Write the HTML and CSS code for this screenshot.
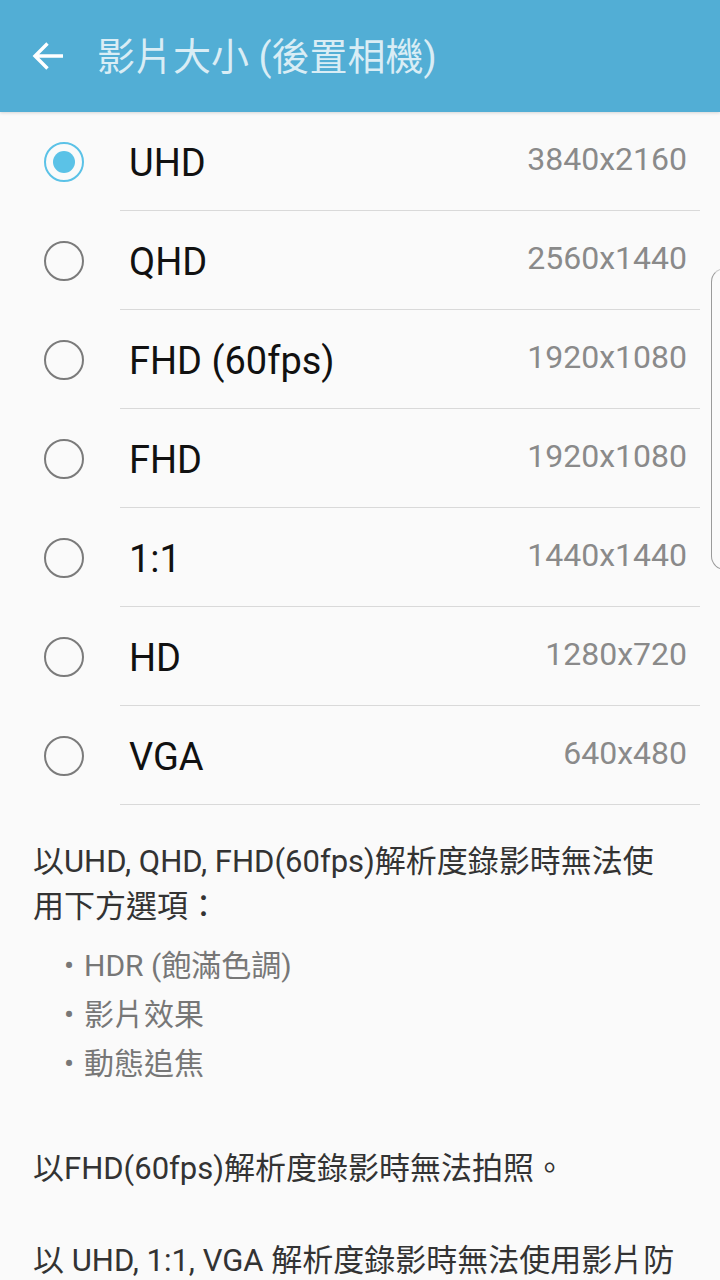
FILE: index.html
```html
<!DOCTYPE html>
<html lang="zh-Hant">
<head>
    <meta charset="UTF-8">
    <meta name="viewport" content="width=device-width, initial-scale=1.0">
    <title>影片大小 (後置相機)</title>
    <link rel="stylesheet" href="styles.css">
</head>
<body>
    <header class="appbar">
        <button class="back" type="button" aria-label="返回">
            <svg width="32" height="32" viewBox="0 0 32 32">
                <path d="M31 16H3M15.5 3.5L3 16l12.5 12.5" fill="none" stroke="#fff" stroke-width="3.4"/>
            </svg>
        </button>
        <h1 class="title">影片大小 (後置相機)</h1>
    </header>

    <ul class="options">
        <li class="option">
            <span class="radio checked"></span>
            <div class="option-body">
                <span class="option-name">UHD</span>
                <span class="option-res">3840x2160</span>
            </div>
        </li>
        <li class="option">
            <span class="radio"></span>
            <div class="option-body">
                <span class="option-name">QHD</span>
                <span class="option-res">2560x1440</span>
            </div>
        </li>
        <li class="option">
            <span class="radio"></span>
            <div class="option-body">
                <span class="option-name">FHD (60fps)</span>
                <span class="option-res">1920x1080</span>
            </div>
        </li>
        <li class="option">
            <span class="radio"></span>
            <div class="option-body">
                <span class="option-name">FHD</span>
                <span class="option-res">1920x1080</span>
            </div>
        </li>
        <li class="option">
            <span class="radio"></span>
            <div class="option-body">
                <span class="option-name">1:1</span>
                <span class="option-res">1440x1440</span>
            </div>
        </li>
        <li class="option">
            <span class="radio"></span>
            <div class="option-body">
                <span class="option-name">HD</span>
                <span class="option-res">1280x720</span>
            </div>
        </li>
        <li class="option">
            <span class="radio"></span>
            <div class="option-body">
                <span class="option-name">VGA</span>
                <span class="option-res">640x480</span>
            </div>
        </li>
    </ul>

    <div class="notes">
        <p class="note">以UHD, QHD, FHD(60fps)解析度錄影時無法使用下方選項：</p>
        <ul class="note-list">
            <li>HDR (飽滿色調)</li>
            <li>影片效果</li>
            <li>動態追焦</li>
        </ul>
        <p class="note note-gap">以FHD(60fps)解析度錄影時無法拍照。</p>
        <p class="note note-last">以 UHD, 1:1, VGA 解析度錄影時無法使用影片防手震。</p>
    </div>

    <div class="edge-handle"></div>
</body>
</html>
```

FILE: styles.css
```css
body {
    font-family: Roboto, "Noto Sans CJK TC", sans-serif;
    background-color: #fafafa;
    margin: 0;
    padding: 0;
    width: 720px;
    height: 1280px;
    overflow: hidden;
    position: relative;
}

.appbar {
    height: 112px;
    background-color: #52aed5;
    display: flex;
    align-items: center;
    box-shadow: 0 1px 3px rgba(0, 0, 0, 0.15);
}

.back {
    width: 32px;
    height: 32px;
    margin-left: 32px;
    padding: 0;
    border: none;
    background: none;
    display: flex;
}

.title {
    margin: 0 0 0 33px;
    font-size: 38px;
    font-weight: normal;
    color: rgba(255, 255, 255, 0.78);
    line-height: 1;
    padding-top: 2px;
}

.options {
    list-style: none;
    margin: 0;
    padding: 0;
}

.option {
    display: flex;
    align-items: center;
}

.radio {
    width: 36px;
    height: 36px;
    margin-left: 44px;
    margin-right: 36px;
    border: 2px solid #7b7b7b;
    border-radius: 50%;
    box-sizing: content-box;
    flex-shrink: 0;
    display: flex;
    align-items: center;
    justify-content: center;
}

.radio.checked {
    border-color: #5bc2e7;
}

.radio.checked::after {
    content: "";
    width: 22px;
    height: 22px;
    border-radius: 50%;
    background-color: #5bc2e7;
}

.option-body {
    flex: 1;
    height: 98px;
    margin-right: 20px;
    border-bottom: 1px solid #d9d9d9;
    display: flex;
    align-items: center;
    justify-content: space-between;
}

.option-name {
    padding-left: 9px;
    padding-top: 4px;
    font-size: 38px;
    color: #111;
}

.option-res {
    padding-right: 13px;
    padding-bottom: 4px;
    font-size: 32px;
    color: #8a8a8a;
}

.notes {
    padding: 0 40px 0 33px;
}

.note {
    margin: 34px 0 0;
    font-size: 31px;
    line-height: 45px;
    color: #333;
}

.note-list {
    list-style: none;
    margin: 12px 0 0;
    padding: 0 0 0 31px;
    font-size: 30px;
    line-height: 49px;
    color: #777;
}

.note-list li::before {
    content: "•";
    display: inline-block;
    width: 20px;
}

.note-gap {
    margin-top: 58px;
}

.note-last {
    margin-top: 47px;
}

.edge-handle {
    position: absolute;
    left: 711px;
    top: 268px;
    width: 30px;
    height: 302px;
    border: 1.5px solid #9a9a9a;
    border-top-color: #c8c8c8;
    border-radius: 14px;
    box-sizing: border-box;
}
```
